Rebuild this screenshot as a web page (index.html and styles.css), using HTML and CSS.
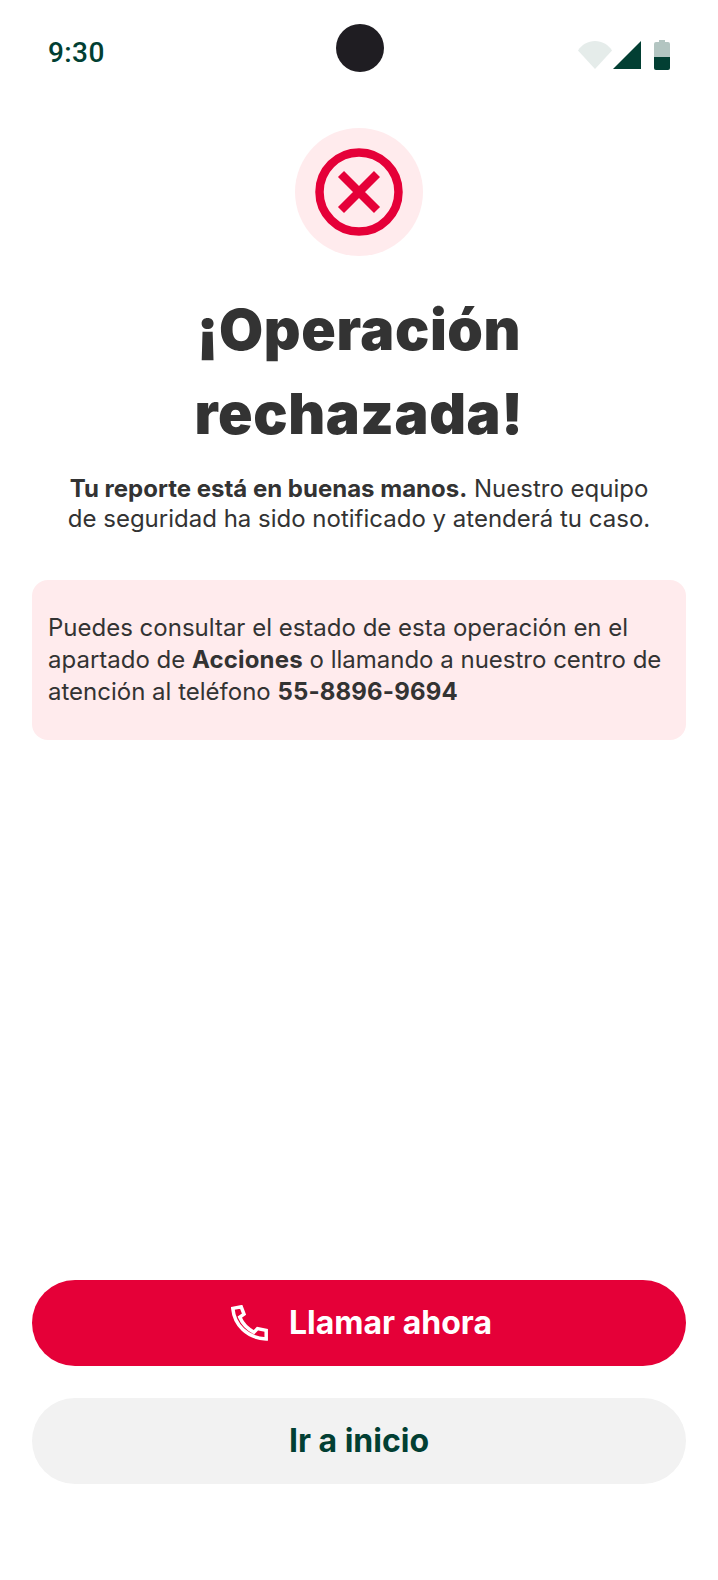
FILE: index.html
```html
<!DOCTYPE html>
<html lang="es">
<head>
<meta charset="utf-8">
<title>Operación rechazada</title>
<link rel="stylesheet" href="styles.css">
</head>
<body>
<div class="screen">
  <header class="status">
    <span class="time">9:30</span>
    <span class="camera"></span>
    <div class="status-icons">
      <svg class="wifi" width="34" height="28" viewBox="0 0 34 28"><path d="M0 9.500C4 3.500 10 0 17 0s13 3.500 17 9.500L17 28z" fill="#e5ecea"/></svg>
      <svg class="signal" width="28" height="28" viewBox="0 0 28 28"><path d="M28 0v28H0z" fill="#023f33"/></svg>
      <svg class="battery" width="16" height="30" viewBox="0 0 16 30"><path d="M5 0h6v2h3a2 2 0 0 1 2 2v13H0V4a2 2 0 0 1 2-2h3z" fill="#b3c5c1"/><path d="M0 17h16v11a2 2 0 0 1-2 2H2a2 2 0 0 1-2-2z" fill="#023f33"/></svg>
    </div>
  </header>
  <main class="content">
    <div class="badge">
      <svg width="88" height="88" viewBox="0 0 88 88"><circle cx="44" cy="44" r="39.500" fill="none" stroke="#e50038" stroke-width="8.500"/><path d="M26 26l36 36M62 26L26 62" fill="none" stroke="#e50038" stroke-width="8.500"/></svg>
    </div>
    <h1 class="title">¡Operación<br>rechazada!</h1>
    <p class="lead"><strong>Tu reporte está en buenas manos.</strong> Nuestro equipo de seguridad ha sido notificado y atenderá tu caso.</p>
    <div class="notice">Puedes consultar el estado de esta operación en el apartado de <strong>Acciones</strong> o llamando a nuestro centro de atención al teléfono <strong>55-8896-9694</strong></div>
  </main>
  <footer class="actions">
    <button class="btn btn-primary">
      <svg class="btn-icon" width="37" height="36" viewBox="0 0 37 36"><path d="M1.800 3.400L10.200 1.800l2.800 7.400L8.800 12.200C11.500 18.500 17 24 23 27.200L26.500 23.600l8.700 1.800V34C16 33 3.300 20 1.800 3.400z" fill="none" stroke="#fff" stroke-width="3.500" stroke-linejoin="miter"/></svg>
      Llamar ahora
    </button>
    <button class="btn btn-secondary">Ir a inicio</button>
  </footer>
</div>
</body>
</html>
```
FILE: styles.css
```css
* { box-sizing: border-box; }
html, body { margin: 0; padding: 0; background: #fff; }
.screen {
  width: 718px;
  height: 1580px;
  display: flex;
  flex-direction: column;
  font-family: Inter, "Noto Sans", sans-serif;
  color: #333;
  position: relative;
}
.status {
  height: 128px;
  flex: none;
  padding: 40px 48px 0 48px;
  display: flex;
  justify-content: space-between;
  align-items: flex-start;
}
.time {
  font-family: Roboto, sans-serif;
  font-weight: 500;
  font-size: 28px;
  line-height: 26px;
  color: #023f33;
  letter-spacing: 0.4px;
}
.camera {
  position: absolute;
  left: 336px;
  top: 24px;
  width: 48px;
  height: 48px;
  border-radius: 50%;
  background: #1f1d22;
}
.status-icons { display: flex; align-items: flex-start; }
.wifi { margin-top: 1px; margin-right: 1px; }
.signal { margin-top: 1px; margin-right: 13px; }
.content {
  flex: 1;
  display: flex;
  flex-direction: column;
  align-items: center;
  padding: 0 32px;
}
.badge {
  width: 128px;
  height: 128px;
  border-radius: 50%;
  background: #ffebed;
  display: flex;
  align-items: center;
  justify-content: center;
}
.title {
  margin: 32px 0 0;
  font-family: Inter, sans-serif;
  font-weight: 900;
  font-size: 57px;
  letter-spacing: 0.6px;
  line-height: 84px;
  text-align: center;
  color: #333;
}
.lead {
  margin: 18px 0 0;
  font-size: 24px;
  line-height: 30px;
  text-align: center;
  width: 590px;
}
.lead strong, .notice strong { font-weight: 700; }
.notice strong { letter-spacing: 0.15px; }
.notice {
  margin-top: 46px;
  width: 654px;
  height: 160px;
  padding: 32px 16px;
  background: #ffebed;
  border-radius: 16px;
  font-size: 24px;
  line-height: 32px;
}
.actions {
  flex: none;
  padding: 0 32px 96px;
  display: flex;
  flex-direction: column;
  gap: 32px;
}
.btn {
  height: 86px;
  width: 654px;
  border: 0;
  padding: 0 0 2px;
  border-radius: 43px;
  font-family: Inter, sans-serif;
  font-weight: 700;
  font-size: 32px;
  display: flex;
  align-items: center;
  justify-content: center;
  gap: 21px;
}
.btn-icon { margin-top: 2px; }
.btn-primary { background: #e50038; color: #fff; padding-left: 5px; }
.btn-secondary { background: #f2f2f2; color: #023f33; }
```
